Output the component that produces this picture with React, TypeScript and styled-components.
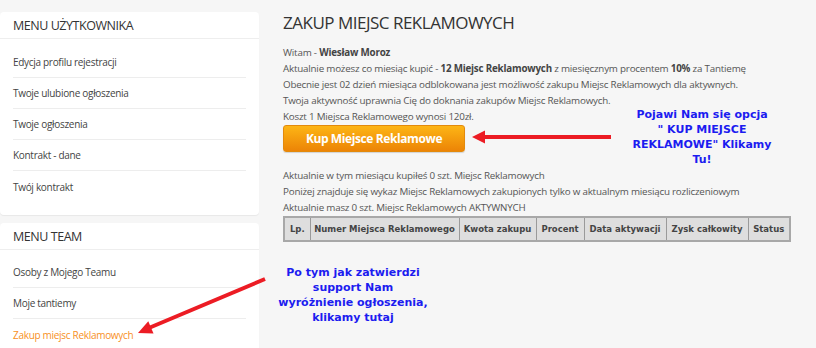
import React from "react";
import styled, { createGlobalStyle } from "styled-components";

const Global = createGlobalStyle`
  html, body { margin: 0; padding: 0; background: #f6f6f6; }
  body { font-family: "Open Sans", "Liberation Sans", sans-serif; color: #555; }
  * { box-sizing: border-box; }
`;

const Page = styled.div`
  position: relative;
  width: 816px;
  height: 348px;
  overflow: hidden;
  display: flex;
  gap: 24px;
  padding-top: 12px;
`;

const Sidebar = styled.aside`
  width: 259px;
  flex: none;
  display: flex;
  flex-direction: column;
  gap: 8px;
`;

const Card = styled.section<{ $pb: number }>`
  background: #fff;
  border-radius: 4px;
  box-shadow: 0 1px 1px rgba(0, 0, 0, 0.06);
  padding-bottom: ${(p) => p.$pb}px;
`;

const CardHeader = styled.h3`
  margin: 0;
  height: 27px;
  padding: 0 13px;
  display: flex;
  align-items: center;
  font-size: 12.5px;
  letter-spacing: -0.45px;
  font-weight: 400;
  color: #333;
  text-transform: uppercase;
  border-bottom: 1px solid #eeeeee;
`;

const MenuList = styled.ul<{ $pt: number }>`
  list-style: none;
  margin: 0;
  padding: ${(p) => p.$pt}px 13px 0;
`;

const MenuItem = styled.li<{ $active?: boolean; $last?: boolean }>`
  height: 31px;
  display: flex;
  align-items: center;
  font-size: 10px;
  letter-spacing: -0.3px;
  color: ${(p) => (p.$active ? "#f7901e" : "#444")};
  border-bottom: ${(p) => (p.$last ? "none" : "1px solid #ededed")};
`;

const Main = styled.main`
  flex: 1;
  display: flex;
  flex-direction: column;
  align-items: flex-start;
`;

const Title = styled.h1`
  margin: 0 0 11px;
  font-size: 17px;
  letter-spacing: -0.5px;
  line-height: 22px;
  font-weight: 400;
  color: #333;
`;

const Line = styled.p`
  margin: 0;
  font-size: 9.8px;
  letter-spacing: -0.2px;
  line-height: 16px;
  color: #555;
  white-space: nowrap;
  b { color: #444; font-weight: 700; }
`;

const BuyButton = styled.button`
  margin: 0 0 16px;
  width: 182px;
  height: 27px;
  border: 1px solid #e38a0c;
  border-radius: 3px;
  background: linear-gradient(#fdb515, #ec8406);
  color: #fff;
  font-family: "Open Sans", "Liberation Sans", sans-serif;
  font-weight: 700;
  font-size: 12px;
  letter-spacing: -0.4px;
  padding: 0;
  box-shadow: 0 1px 1px rgba(0, 0, 0, 0.15);
`;

const Table = styled.table`
  border-collapse: collapse;
  border: 2px solid #a8a8a8;
  height: 26px;
  font-family: "DejaVu Sans", Verdana, sans-serif;
`;

const Th = styled.th<{ $w: number }>`
  width: ${(p) => p.$w}px;
  background: #dedede;
  border: 1px solid #9a9a9a;
  font-size: 8.5px;
  font-weight: 700;
  color: #444;
  padding: 0;
  white-space: nowrap;
`;

const Callout = styled.div<{ $x: number; $y: number; $w: number }>`
  position: absolute;
  left: ${(p) => p.$x}px;
  top: ${(p) => p.$y}px;
  width: ${(p) => p.$w}px;
  text-align: center;
  white-space: nowrap;
  font-family: "DejaVu Sans", Verdana, sans-serif;
  font-weight: 700;
  font-size: 11px;
  line-height: 15px;
  color: #1c1cf0;
`;

const Overlay = styled.svg`
  position: absolute;
  left: 0;
  top: 0;
  pointer-events: none;
`;

const cols: [string, number][] = [
  ["Lp.", 26],
  ["Numer Miejsca Reklamowego", 149],
  ["Kwota zakupu", 77],
  ["Procent", 48],
  ["Data aktywacji", 82],
  ["Zysk całkowity", 82],
  ["Status", 42],
];

export default function App() {
  return (
    <>
      <Global />
      <Page>
        <Sidebar>
          <Card $pb={13}>
            <CardHeader>Menu Użytkownika</CardHeader>
            <MenuList $pt={8}>
              <MenuItem>Edycja profilu rejestracji</MenuItem>
              <MenuItem>Twoje ulubione ogłoszenia</MenuItem>
              <MenuItem>Twoje ogłoszenia</MenuItem>
              <MenuItem>Kontrakt - dane</MenuItem>
              <MenuItem $last>Twój kontrakt</MenuItem>
            </MenuList>
          </Card>
          <Card $pb={20}>
            <CardHeader>Menu Team</CardHeader>
            <MenuList $pt={7}>
              <MenuItem>Osoby z Mojego Teamu</MenuItem>
              <MenuItem>Moje tantiemy</MenuItem>
              <MenuItem $active $last>
                Zakup miejsc Reklamowych
              </MenuItem>
            </MenuList>
          </Card>
        </Sidebar>
        <Main>
          <Title>ZAKUP MIEJSC REKLAMOWYCH</Title>
          <Line>
            Witam - <b>Wiesław Moroz</b>
          </Line>
          <Line>
            Aktualnie możesz co miesiąc kupić - <b>12 Miejsc Reklamowych</b> z
            miesięcznym procentem <b>10%</b> za Tantiemę
          </Line>
          <Line>
            Obecnie jest 02 dzień miesiąca odblokowana jest możliwość zakupu
            Miejsc Reklamowych dla aktywnych.
          </Line>
          <Line>
            Twoja aktywność uprawnia Cię do doknania zakupów Miejsc
            Reklamowych.
          </Line>
          <Line>Koszt 1 Miejsca Reklamowego wynosi 120zł.</Line>
          <BuyButton>Kup Miejsce Reklamowe</BuyButton>
          <Line>Aktualnie w tym miesiącu kupiłeś 0 szt. Miejsc Reklamowych</Line>
          <Line>
            Poniżej znajduje się wykaz Miejsc Reklamowych zakupionych tylko w
            aktualnym miesiącu rozliczeniowym
          </Line>
          <Line>Aktualnie masz 0 szt. Miejsc Reklamowych AKTYWNYCH</Line>
          <Table>
            <thead>
              <tr>
                {cols.map(([label, w]) => (
                  <Th key={label} $w={w}>
                    {label}
                  </Th>
                ))}
              </tr>
            </thead>
          </Table>
        </Main>
        <Callout $x={627} $y={107} $w={150}>
          Pojawi Nam się opcja
          <br />" KUP MIEJSCE
          <br />
          REKLAMOWE" Klikamy
          <br />
          Tu!
        </Callout>
        <Callout $x={278} $y={265} $w={150}>
          Po tym jak zatwierdzi
          <br />
          support Nam
          <br />
          wyróżnienie ogłoszenia,
          <br />
          klikamy tutaj
        </Callout>
        <Overlay width={816} height={348} viewBox="0 0 816 348">
          <line x1={611} y1={137} x2={482} y2={137} stroke="#ec1c24" strokeWidth={4} />
          <polygon points="472,137 485,130.5 485,143.5" fill="#ec1c24" />
          <line x1={265} y1={279} x2={150} y2={327.5} stroke="#ec1c24" strokeWidth={4} />
          <polygon points="138,333 153.5,333.5 148.3,321.3" fill="#ec1c24" />
        </Overlay>
      </Page>
    </>
  );
}
